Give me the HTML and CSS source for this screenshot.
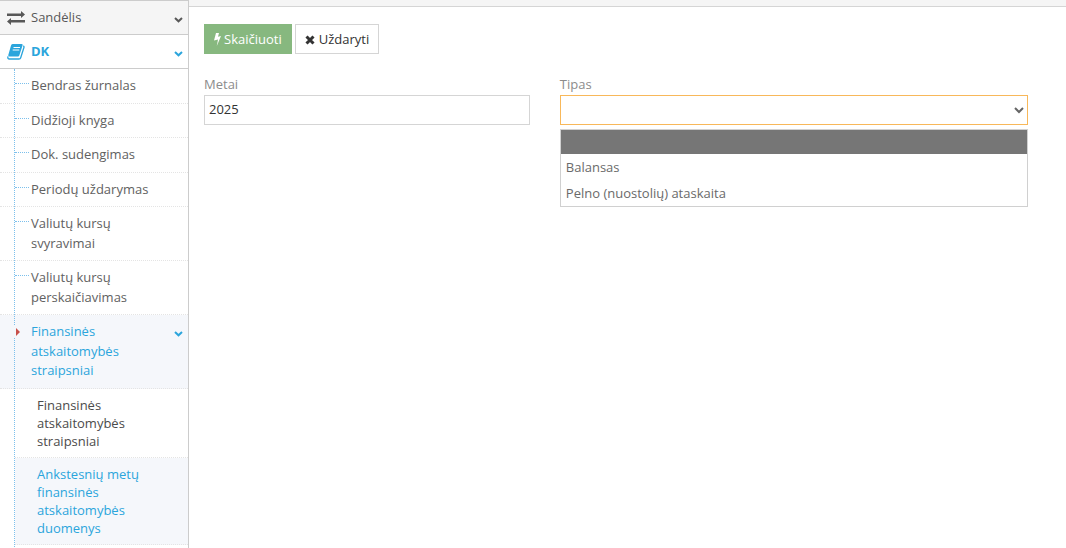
FILE: index.html
```html
<!DOCTYPE html>
<html lang="lt">
<head>
<meta charset="utf-8">
<title>Ankstesnių metų finansinės atskaitomybės duomenys</title>
<link rel="stylesheet" href="styles.css">
</head>
<body>
<div class="app">
  <nav class="sidebar">
    <a class="section section-muted" href="#">
      <svg class="section-icon" viewBox="0 0 18 14"><path d="M0 2.500h14V0l4 3.500-4 3.500V5H0zM18 9H4V7L0 10.500 4 14v-2.500h14z" fill="currentColor"/></svg>
      <span>Sandėlis</span>
      <svg class="chevron" viewBox="0 0 9 6"><path d="M1 1l3.500 3.300L8 1" fill="none" stroke="currentColor" stroke-width="2"/></svg>
    </a>
    <a class="section section-open" href="#">
      <svg class="section-icon section-book" viewBox="0 0 18 16"><path d="M5.500 0H14.500Q16 0 15.600 1.300L12.300 11.500Q12 12.500 11 12.500H2.500Q1 12.500 1.300 11L4 1.500Q4.300 0 5.500 0z" fill="currentColor"/><path d="M1 12.300Q.3 15 2.500 15H12Q13.300 15 13.700 13.700L17 3.300Q17.200 2.500 16.300 1.900" fill="none" stroke="currentColor" stroke-width="1.300"/><path d="M6.500 3.500H13M5.700 6H12.300" stroke="#fff" stroke-width="1"/></svg>
      <span>DK</span>
      <svg class="chevron" viewBox="0 0 9 6"><path d="M1 1l3.500 3.300L8 1" fill="none" stroke="currentColor" stroke-width="2"/></svg>
    </a>
    <ul class="submenu">
      <li><a class="entry" href="#">Bendras žurnalas</a></li>
      <li><a class="entry" href="#">Didžioji knyga</a></li>
      <li><a class="entry" href="#">Dok. sudengimas</a></li>
      <li><a class="entry" href="#">Periodų uždarymas</a></li>
      <li><a class="entry" href="#">Valiutų kursų svyravimai</a></li>
      <li><a class="entry" href="#">Valiutų kursų perskaičiavimas</a></li>
      <li>
        <a class="entry entry-open" href="#">
          <svg class="marker" viewBox="0 0 6 12"><path d="M2 2v8l4-4z" fill="#c8504a"/></svg>
          <span>Finansinės atskaitomybės straipsniai</span>
          <svg class="chevron" viewBox="0 0 9 6"><path d="M1 1l3.500 3.300L8 1" fill="none" stroke="currentColor" stroke-width="2"/></svg>
        </a>
        <ul class="nested">
          <li><a class="leaf" href="#">Finansinės atskaitomybės straipsniai</a></li>
          <li><a class="leaf leaf-active" href="#">Ankstesnių metų finansinės atskaitomybės duomenys</a></li>
        </ul>
      </li>
    </ul>
  </nav>
  <main class="main">
    <div class="topbar"></div>
    <form class="content">
      <div class="actions">
        <button class="button button-primary" type="button"><svg class="bolt" viewBox="0 0 7 13"><path d="M2 0h3L4 3.800 7 3 2.800 13l1.200-6.500L0 7.600z" fill="currentColor"/></svg>Skaičiuoti</button>
        <button class="button" type="button"><svg class="cross" viewBox="0 0 10 10"><path d="M1.500 1.500l7 7M8.500 1.500l-7 7" stroke="currentColor" stroke-width="3"/></svg>Uždaryti</button>
      </div>
      <div class="fields">
        <div class="field">
          <label for="year">Metai</label>
          <input class="control" id="year" type="text" value="2025">
        </div>
        <div class="field">
          <label for="type">Tipas</label>
          <div class="picker">
            <select class="control control-focus" id="type">
              <option></option>
              <option>Balansas</option>
              <option>Pelno (nuostolių) ataskaita</option>
            </select>
            <svg class="picker-arrow" viewBox="0 0 10 7"><path d="M1 1l4 4 4-4" fill="none" stroke="currentColor" stroke-width="2"/></svg>
            <ul class="options">
              <li class="option option-current"></li>
              <li class="option">Balansas</li>
              <li class="option">Pelno (nuostolių) ataskaita</li>
            </ul>
          </div>
        </div>
      </div>
    </form>
  </main>
</div>
</body>
</html>
```
FILE: styles.css
```css
* { box-sizing: border-box; }
body {
  margin: 0;
  overflow: hidden;
  background: #fff;
  color: #393939;
  font: 13px/1.5 "Open Sans", sans-serif;
}
ul { margin: 0; padding: 0; list-style: none; }
a { color: inherit; text-decoration: none; }
svg { display: block; flex: none; }

.app { display: flex; min-height: 100vh; }
.sidebar {
  flex: none;
  width: 189px;
  border-right: 1px solid #ccc;
  border-top: 1px solid #ccc;
}
.section {
  display: flex;
  align-items: center;
  height: 34px;
  padding: 0 5px 0 7px;
  border-bottom: 1px solid #ccc;
  color: #585858;
}
.section-muted { background: #f5f5f5; }
.section-open { color: #2ba5dc; font-weight: 700; }
.section-icon { width: 18px; height: 14px; margin-right: 6px; }
.section-book { height: 16px; }
.chevron { width: 9px; height: 6px; margin: 4px 0 0 auto; }

.submenu { position: relative; color: #616161; }
.submenu::before {
  content: "";
  position: absolute;
  z-index: 1;
  top: 0;
  bottom: -20px;
  left: 14px;
  border-left: 1px dotted #7cc0ec;
}
.entry {
  display: block;
  position: relative;
  padding: 7px 16px 7px 31px;
  border-bottom: 1px dotted #e4e4e4;
}
.entry::before {
  content: "";
  position: absolute;
  top: 14px;
  left: 15px;
  width: 14px;
  border-top: 1px dotted #7cc0ec;
}
.entry-open {
  display: flex;
  padding-right: 5px;
  background: #f5f7fb;
  color: #2ba5dc;
}
.entry-open::before { display: none; }
.entry-open span { width: 110px; }
.entry-open .chevron { margin-top: 9px; }
.marker {
  position: absolute;
  z-index: 2;
  top: 11px;
  left: 14px;
  width: 6px;
  height: 12px;
  background: #f5f7fb;
}
.nested { padding-left: 15px; }
.leaf {
  display: block;
  padding: 7px 40px 7px 22px;
  border-bottom: 1px dotted #e4e4e4;
  line-height: 18px;
  color: #4b4b4b;
}
.leaf-active { background: #f5f7fb; color: #2ba5dc; }

.main { flex: 1; min-width: 0; }
.topbar { height: 7px; background: #f5f5f5; border-bottom: 1px solid #d5d5d5; }
.content { padding: 17px 23px 0 0; }
.actions { display: flex; gap: 3px; padding: 0 15px; }
.button {
  display: flex;
  align-items: center;
  gap: 4px;
  height: 30px;
  padding: 1px 9px 0;
  border: 1px solid #d5d5d5;
  background: #fff;
  color: #333;
  font: inherit;
}
.button-primary { border-color: #87b87f; background: #87b87f; color: #fff; gap: 3px; }
.bolt { width: 7px; height: 13px; }
.cross { width: 10px; height: 10px; }
.fields {
  display: grid;
  grid-template-columns: 5fr 7fr;
  padding-top: 20px;
}
.field { padding: 0 15px; }
label { display: block; line-height: 21px; color: #8c8c8c; }
.control {
  display: block;
  width: 100%;
  height: 30px;
  padding: 0 4px 2px;
  border: 1px solid #d5d5d5;
  border-radius: 0;
  outline: 0;
  background: #fff;
  color: #333;
  font: inherit;
  appearance: none;
}
.control-focus { border-color: #f8b85a; }
.picker { position: relative; }
.picker-arrow {
  position: absolute;
  top: 12px;
  right: 4px;
  width: 10px;
  height: 7px;
  color: #666;
  pointer-events: none;
}
.options {
  position: absolute;
  top: 34px;
  left: 0;
  right: 0;
  border: 1px solid #d0d0d0;
  background: #fff;
}
.option { height: 26px; padding: 0 5px; line-height: 26px; color: #6a6a6a; }
.option-current { height: 24px; background: #767676; }
```
